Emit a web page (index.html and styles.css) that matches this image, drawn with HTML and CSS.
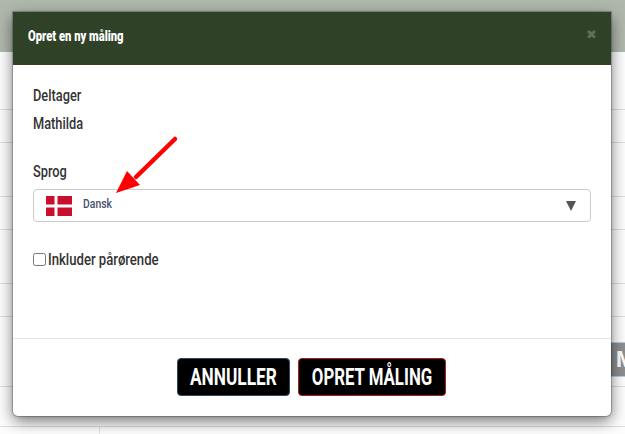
FILE: index.html
```html
<!DOCTYPE html>
<html>
<head>
    <title>Opret en ny måling</title>
    <link rel="stylesheet" href="styles.css">
</head>
<body>
    <!-- Page behind the dialog -->
    <div class="page">
        <div class="page-top"></div>
        <div class="page-row row-first"></div>
        <div class="page-row"></div>
        <div class="page-row row-gap"></div>
        <div class="page-row"></div>
        <div class="page-row row-gap"></div>
        <div class="page-row"></div>
        <div class="page-row row-tall"></div>
        <div class="page-row row-last"></div>
        <div class="page-cell"></div>
    </div>
    <div class="side-tag">M</div>

    <div class="modal">
        <div class="modal-header">
            <span class="modal-title narrow">Opret en ny måling</span>
            <span class="close">&#10006;</span>
        </div>
        <div class="modal-body">
            <div class="line"><span class="narrow">Deltager</span></div>
            <div class="line"><span class="narrow">Mathilda</span></div>
            <div class="line label"><span class="narrow">Sprog</span></div>
            <div class="select">
                <svg class="flag" width="26" height="20" viewBox="0 0 26 20">
                    <rect width="26" height="20" fill="#c8102e"/>
                    <rect x="8.5" width="3" height="20" fill="#fff"/>
                    <rect y="8.5" width="26" height="3" fill="#fff"/>
                </svg>
                <span class="select-text narrow">Dansk</span>
                <span class="caret"></span>
            </div>
            <label class="check">
                <input type="checkbox">
                <span class="narrow check-text">Inkluder pårørende</span>
            </label>
        </div>
        <div class="modal-footer">
            <button class="btn btn-cancel"><span class="btn-text">ANNULLER</span></button>
            <button class="btn btn-create"><span class="btn-text">OPRET MÅLING</span></button>
        </div>
    </div>

    <!-- Arrow drawn on top of the screenshot -->
    <svg class="arrow" width="70" height="64" viewBox="0 0 70 64">
        <path d="M61 4 L22 42" stroke="#f00" stroke-width="4.5" stroke-linecap="round" fill="none"/>
        <polygon points="2,58 13,36 26,50" fill="#f00"/>
    </svg>
</body>
</html>
```

FILE: styles.css
```css
html, body {
    margin: 0;
    height: 100%;
    overflow: hidden;
}

body {
    font-family: Roboto, "Liberation Sans", sans-serif;
    color: #333;
    background: #fcfdfc;
}

/* no condensed font is installed, so squeeze the text sideways */
.narrow {
    display: inline-block;
    white-space: nowrap;
    transform: scaleX(0.8);
    transform-origin: left center;
}

.page-top {
    height: 52px;
    background: #b0b8ae;
}

.page-row {
    height: 32px;
    border-bottom: 1px solid #dcdedc;
}

.row-first {
    height: 57px;
}

.row-gap {
    height: 53px;
}

.row-tall {
    height: 69px;
}

.row-last {
    height: 39px;
}

.page-cell {
    width: 99px;
    height: 8px;
    border-right: 1px solid #e4e6e4;
}

.side-tag {
    position: absolute;
    left: 611px;
    top: 342px;
    width: 9px;
    height: 33px;
    padding-left: 5px;
    overflow: hidden;
    background: #8f8f8f;
    border-top: 1px solid #a9d3e8;
    border-bottom: 1px solid #a9d3e8;
    color: #fff;
    font-size: 22px;
    font-weight: bold;
    line-height: 33px;
}

.modal {
    position: absolute;
    left: 13px;
    top: 12px;
    width: 598px;
    height: 404px;
    background: #fff;
    border-radius: 0 0 5px 5px;
    box-shadow: 0 5px 15px rgba(0, 0, 0, 0.55), 0 0 1px 1px rgba(0, 0, 0, 0.25);
    display: flex;
    flex-direction: column;
}

.modal-header {
    height: 53px;
    box-sizing: border-box;
    background: #2f4228;
    display: flex;
    align-items: center;
    justify-content: space-between;
    padding: 0 14px 5px 15px;
}

.modal-title {
    color: #fff;
    font-size: 14px;
    font-weight: 900;
}

.close {
    color: #5f6f58;
    font-family: "DejaVu Sans", sans-serif;
    font-size: 13px;
    line-height: 1;
    margin-bottom: 3px;
}

.modal-body {
    flex: 1;
    padding: 17px 20px 0;
}

.line {
    font-size: 16px;
    font-weight: 500;
    line-height: 28px;
}

.label {
    margin-top: 20px;
}

.select {
    height: 31px;
    margin-top: 3px;
    border: 1px solid #ccc;
    border-radius: 4px;
    display: flex;
    align-items: center;
    padding: 0 14px 0 12px;
}

.flag {
    margin-right: 11px;
}

.select-text {
    flex: 1;
    font-size: 13px;
    font-weight: 500;
    color: #46506a;
    margin-bottom: 5px;
}

.caret {
    width: 0;
    height: 0;
    border-left: 5px solid transparent;
    border-right: 5px solid transparent;
    border-top: 10px solid #555;
}

.check {
    display: flex;
    align-items: center;
    margin-top: 28px;
    font-size: 16px;
    font-weight: 500;
}

.check-text {
    transform: scaleX(0.82);
}

.check input {
    width: 13px;
    height: 13px;
    margin: 0 2px 0 0;
}

.modal-footer {
    height: 78px;
    box-sizing: border-box;
    padding: 0 1px 1px 0;
    border-top: 1px solid #e5e5e5;
    display: flex;
    align-items: center;
    justify-content: center;
    gap: 8px;
}

.btn {
    height: 38px;
    padding: 0;
    display: flex;
    align-items: center;
    justify-content: center;
    background: #000;
    color: #fff;
    font-family: inherit;
    font-size: 24px;
    font-weight: bold;
    border-radius: 4px;
    border: 1px solid #2e4a62;
}

.btn-cancel {
    width: 113px;
}

.btn-create {
    width: 148px;
    border-color: #a61c1c;
}

.btn-text {
    white-space: nowrap;
    transform: scaleX(0.72);
}

.btn-create .btn-text {
    transform: scaleX(0.7);
}

.arrow {
    position: absolute;
    left: 114px;
    top: 135px;
}
```
